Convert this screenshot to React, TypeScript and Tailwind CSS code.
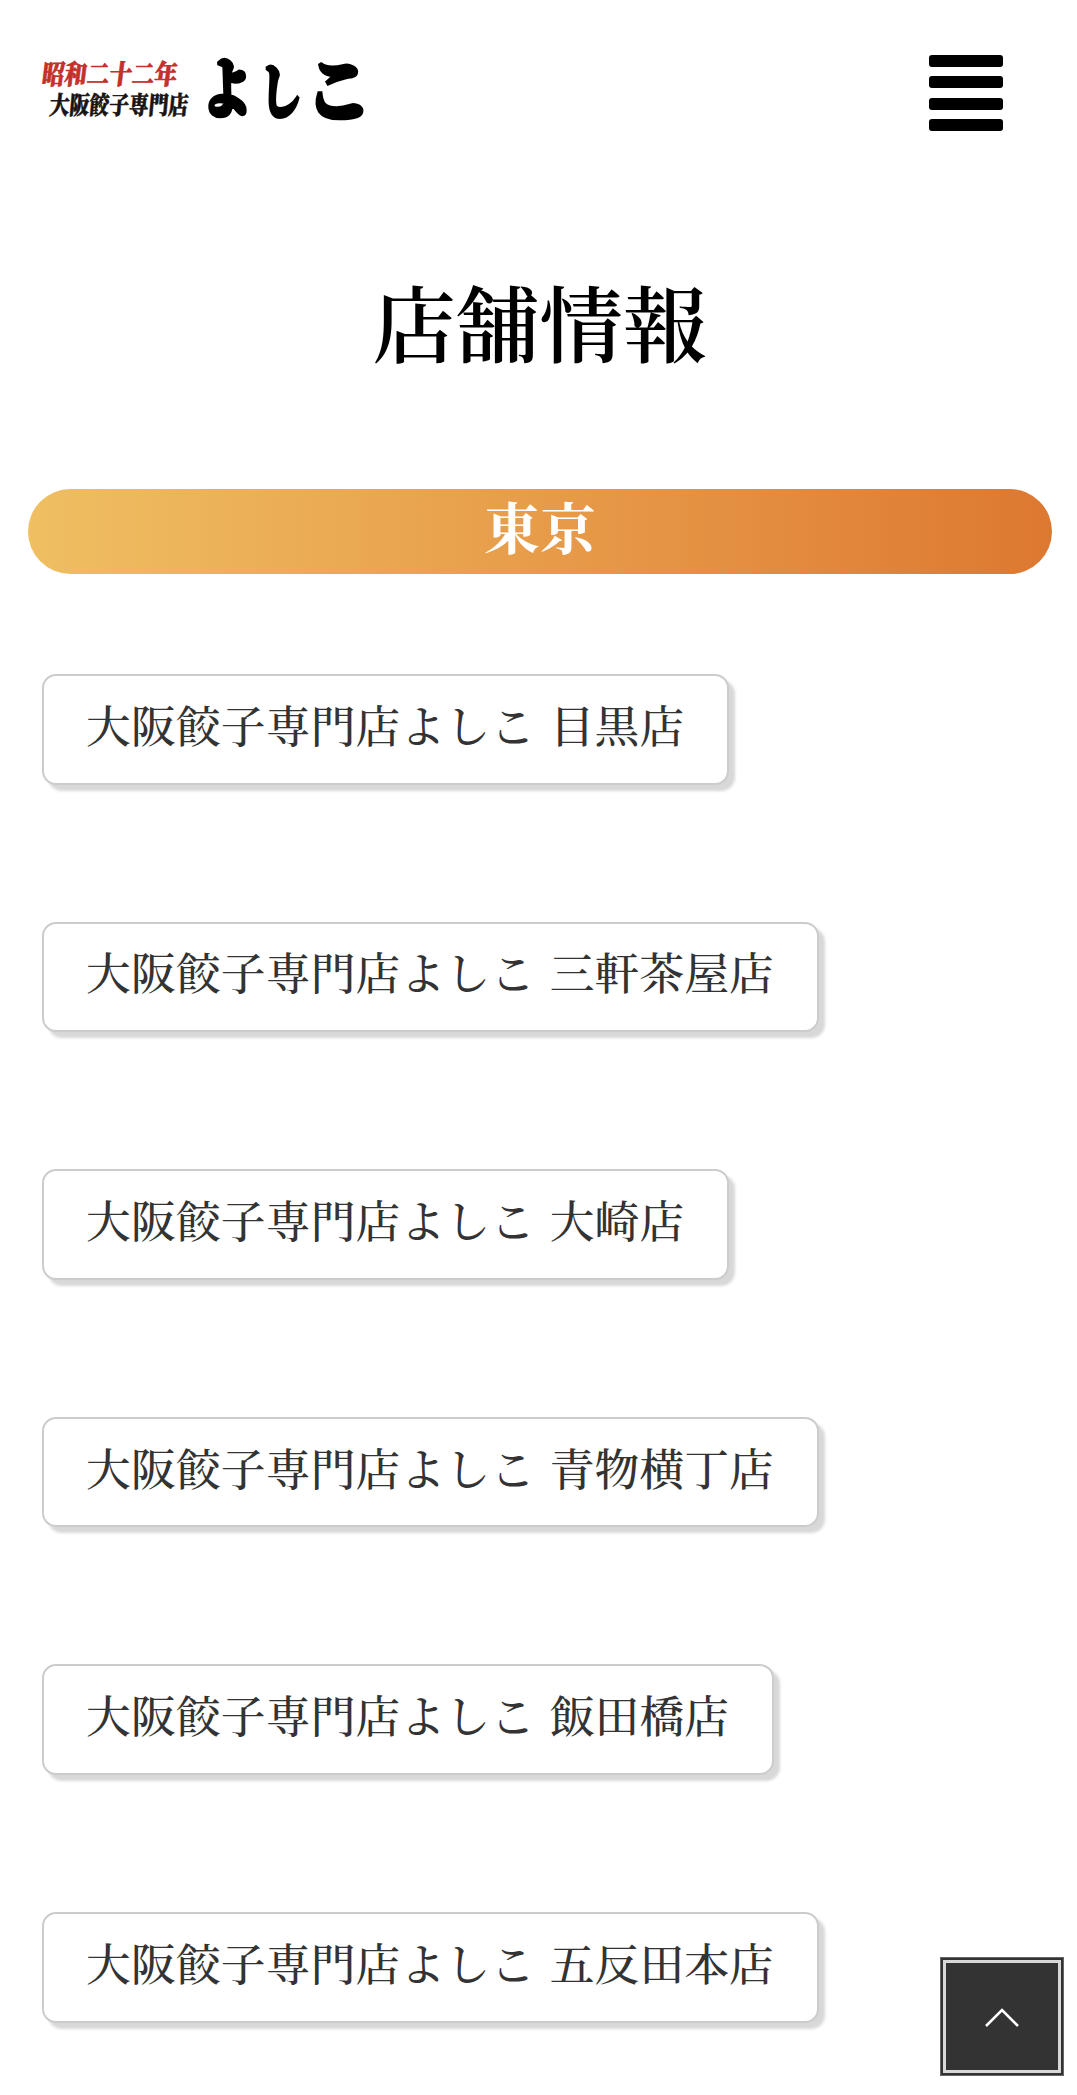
import React from "react";

const shops = [
  "目黒店",
  "三軒茶屋店",
  "大崎店",
  "青物横丁店",
  "飯田橋店",
  "五反田本店",
];

function Logo() {
  return (
    <svg width="360" height="110" viewBox="0 0 360 110" role="img" className="overflow-visible font-black">
      <g fill="#c4302b" stroke="#c4302b" strokeWidth="0.6">
        <text fontSize="22.5" transform="translate(1 44) skewX(-7) scale(1 1.2)">
          昭和二十二年
        </text>
      </g>
      <g fill="#1a1311" stroke="#1a1311" strokeWidth="0.5">
        <text fontSize="20" transform="translate(9 74) skewX(-5) scale(.99 1.24)">
          大阪餃子専門店
        </text>
      </g>
      <g fill="#000" stroke="#000" strokeWidth="4">
        <text fontSize="60" transform="translate(162 72) scale(.84 1.08)">よ</text>
        <text fontSize="60" transform="translate(220 73) scale(.7 .96)">し</text>
        <text fontSize="60" transform="translate(266 76) scale(1.1 1.16)">こ</text>
      </g>
    </svg>
  );
}

function MenuButton() {
  return (
    <button aria-label="メニュー" className="mt-[55px] mr-[74px] flex h-[76px] w-[74px] flex-col justify-between">
      {[0, 1, 2, 3].map((n) => (
        <span key={n} className="h-3 w-full rounded-[3px] bg-black" />
      ))}
    </button>
  );
}

export default function App() {
  return (
    <div className="relative h-[2095px] w-[1077px] overflow-hidden bg-white text-[#333] font-['Noto_Serif_CJK_JP','Noto_Serif_JP','Noto_Sans_CJK_JP',serif]">
      <header className="flex h-[266px] items-start justify-between">
        <div className="pt-[40px] pl-10">
          <Logo />
        </div>
        <MenuButton />
      </header>

      <main>
        <h1 className="h-[223px] pl-0.5 text-center text-[83.5px] leading-[108px] font-semibold text-black">店舗情報</h1>

        <h2 className="mr-[25px] ml-7 h-[85px] rounded-full bg-linear-to-r from-[#efbf62] to-[#dd7831] text-center text-[56px] leading-[72px] font-bold text-white">
          東京
        </h2>

        <ul className="mt-[100px] flex flex-col items-start gap-[137px] pl-[42px]">
          {shops.map((shop) => (
            <li key={shop}>
              <a
                href="#"
                className="flex h-[110.6px] items-center rounded-[14px] border-2 border-[#ccc] bg-white pr-[43px] pb-2.5 pl-[42px] text-[44.8px] leading-none font-medium whitespace-nowrap shadow-[6px_6px_3px_#d8d8d8]"
              >
                <span className="tracking-[0.13px]">大阪餃子専門店よしこ</span>
                <span className="ml-[14.5px]">{shop}</span>
              </a>
            </li>
          ))}
        </ul>
      </main>

      <a
        href="#"
        aria-label="ページトップへ"
        className="absolute top-[1957px] left-[940px] flex h-[119px] w-[124px] border border-[#666] bg-[#333] p-0.5"
      >
        <span className="flex flex-1 items-center justify-center border-3 border-[#d8d8d8]">
          <svg width="36" height="20" viewBox="0 0 36 20" fill="none" stroke="#fff" strokeWidth="2.5">
            <path d="M2 19 18 3l16 16" />
          </svg>
        </span>
      </a>
    </div>
  );
}
